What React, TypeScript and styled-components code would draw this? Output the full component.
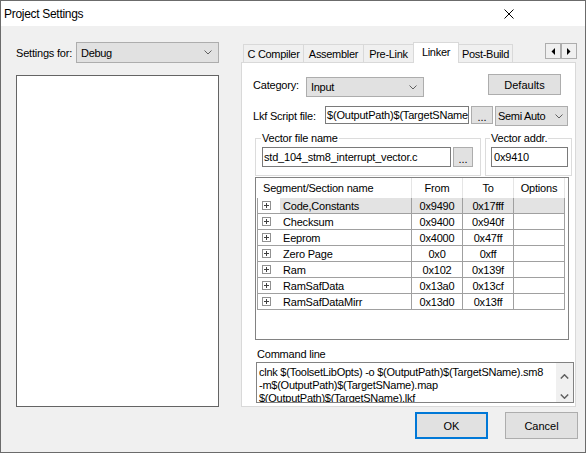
import React from "react";
import styled, { createGlobalStyle } from "styled-components";

const GlobalStyle = createGlobalStyle`
	html, body {
		margin: 0;
		padding: 0;
		background: #ffffff;
	}
	body {
		font-family: "Liberation Sans", Arial, sans-serif;
		font-size: 11px;
		color: #000000;
	}
	* {
		box-sizing: border-box;
	}
`;

const Window = styled.div`
	width: 586px;
	height: 453px;
	border: 1px solid #6b6b6b;
	background: #f0f0f0;
	display: flex;
	flex-direction: column;
	overflow: hidden;
`;

const TitleBar = styled.div`
	flex: none;
	height: 25px;
	background: #ffffff;
	display: flex;
	align-items: center;
	padding-left: 3px;
	font-size: 12px;

	> .title {
		flex: 1;
		letter-spacing: -0.3px;
	}
`;

const CloseGlyph = styled.svg`
	margin-right: 71px;
`;

const Main = styled.div`
	flex: none;
	height: 381px;
	display: flex;
	padding: 16px 0 0 15px;
`;

const LeftColumn = styled.div`
	width: 203px;
	display: flex;
	flex-direction: column;
`;

const LabelRow = styled.div`
	display: flex;
	align-items: center;
	height: 21px;
`;

const Label = styled.span<{ $w: number }>`
	width: ${p => p.$w}px;
	flex: none;
	white-space: nowrap;
	letter-spacing: -0.2px;
`;

const ComboBox = styled.div<{ $w?: number; $h: number; $pad?: number; $top?: number; $right?: number }>`
	${p => (p.$w ? `width: ${p.$w}px; flex: none;` : "flex: 1;")}
	height: ${p => p.$h}px;
	margin-top: ${p => p.$top ?? 0}px;
	background: #e1e1e1;
	border: 1px solid #adadad;
	display: flex;
	align-items: center;
	padding: 0 ${p => p.$right ?? 6}px 0 ${p => p.$pad ?? 4}px;

	> .value {
		flex: 1;
		white-space: nowrap;
		overflow: hidden;
		letter-spacing: -0.3px;
	}
	> svg {
		flex: none;
	}
`;

const ListBox = styled.div`
	margin-top: 12px;
	flex: 1;
	background: #ffffff;
	border: 1px solid #646464;
`;

const RightColumn = styled.div`
	width: 335px;
	margin-left: 22px;
	display: flex;
	flex-direction: column;
`;

const TabStrip = styled.div`
	height: 20px;
	display: flex;
	align-items: flex-end;
	padding-left: 2px;
`;

const Tab = styled.div<{ $w: number; $active?: boolean }>`
	width: ${p => p.$w}px;
	height: ${p => (p.$active ? 21 : 18)}px;
	margin-right: -1px;
	margin-bottom: ${p => (p.$active ? -1 : 0)}px;
	border: 1px solid #d9d9d9;
	border-bottom: none;
	background: ${p => (p.$active ? "#ffffff" : "#f0f0f0")};
	position: relative;
	z-index: ${p => (p.$active ? 1 : 0)};
	display: flex;
	align-items: center;
	justify-content: center;
	padding-bottom: ${p => (p.$active ? 2 : 0)}px;
	white-space: nowrap;
	letter-spacing: -0.3px;
`;

const TabScroller = styled.div`
	margin-left: auto;
	margin-right: -1px;
	align-self: flex-start;
	margin-top: 1px;
	display: flex;
`;

const ScrollButton = styled.div`
	width: 16px;
	height: 16px;
	border: 1px solid #adadad;
	background: #f0f0f0;
	display: flex;
	align-items: center;
	justify-content: center;
`;

const Panel = styled.div`
	height: 345px;
	border: 1px solid #d9d9d9;
	background: #ffffff;
	padding: 11px 0 0 11px;
	display: flex;
	flex-direction: column;
`;

const FieldRow = styled.div<{ $top?: number; $h?: number }>`
	display: flex;
	align-items: flex-start;
	margin-top: ${p => p.$top ?? 0}px;
	${p => (p.$h ? `height: ${p.$h}px;` : "")}

	> ${Label} {
		align-self: center;
	}
`;

const Button = styled.div<{ $w: number; $h: number; $default?: boolean }>`
	width: ${p => p.$w}px;
	height: ${p => p.$h}px;
	flex: none;
	background: #e1e1e1;
	border: ${p => (p.$default ? "2px solid #0078d7" : "1px solid #adadad")};
	display: flex;
	align-items: center;
	justify-content: center;
	font-size: 11px;
`;

const DefaultsButton = styled(Button)`
	margin-left: auto;
	margin-right: 14px;
`;

const TextInput = styled.div<{ $w: number; $h: number; $pad?: number }>`
	width: ${p => p.$w}px;
	height: ${p => p.$h}px;
	flex: none;
	background: #ffffff;
	border: 1px solid #7a7a7a;
	display: flex;
	align-items: center;
	padding-left: ${p => p.$pad ?? 1}px;
	white-space: nowrap;
	overflow: hidden;
	letter-spacing: -0.2px;
`;

const BrowseButton = styled.div<{ $w: number; $h: number }>`
	width: ${p => p.$w}px;
	height: ${p => p.$h}px;
	flex: none;
	margin-left: 2px;
	margin-right: 2px;
	background: #e1e1e1;
	border: 1px solid #adadad;
	display: flex;
	align-items: center;
	justify-content: center;
	padding-top: 3px;
`;

const GroupRow = styled.div`
	display: flex;
	gap: 4px;
	margin: 6px 0 0 2px;
`;

const GroupBox = styled.fieldset<{ $w: number; $pad: number; $right: number }>`
	width: ${p => p.$w}px;
	margin: 0;
	border: 1px solid #dcdcdc;
	padding: 2px ${p => p.$right}px 8px ${p => p.$pad}px;
	display: flex;

	> legend {
		padding: 0 1px;
		margin-left: -1px;
		line-height: 13px;
		font-size: 11px;
		letter-spacing: -0.2px;
	}
`;

const Table = styled.div`
	margin: 1px 0 0 2px;
	width: 314px;
	height: 163px;
	border: 1px solid #828282;
	background: #ffffff;
	padding-left: 1px;
`;

const Grid = styled.div`
	display: grid;
	grid-template-columns: 23px 132px 51px 51px 51px;
	width: 308px;
`;

const HeadCell = styled.div<{ $span?: number; $left?: boolean }>`
	grid-column: span ${p => p.$span ?? 1};
	height: 20px;
	display: flex;
	align-items: center;
	justify-content: ${p => (p.$left ? "flex-start" : "center")};
	padding-left: ${p => (p.$left ? 6 : 0)}px;
	border-right: 1px solid #e5e5e5;
	white-space: nowrap;
	letter-spacing: -0.2px;
`;

const Cell = styled.div<{ $first?: boolean; $hot?: boolean; $left?: boolean }>`
	height: 16px;
	display: flex;
	align-items: center;
	justify-content: ${p => (p.$left || p.$first ? "flex-start" : "center")};
	padding-left: ${p => (p.$first ? 4 : p.$left ? 3 : 0)}px;
	border-bottom: 1px solid #a0a0a0;
	border-left: ${p => (p.$first ? "1px solid #a0a0a0" : "none")};
	border-right: ${p => (p.$first ? "none" : "1px solid #a0a0a0")};
	background: ${p => (p.$hot ? "#e3e3e3" : "#ffffff")};
	white-space: nowrap;
	overflow: hidden;
	letter-spacing: -0.2px;
`;

const CommandLabel = styled.div`
	margin: 8px 0 0 4px;
	line-height: 13px;
	letter-spacing: -0.2px;
`;

const CommandBox = styled.div`
	margin: 1px 0 0 3px;
	width: 318px;
	height: 41px;
	border: 1px solid #828282;
	background: #ffffff;
	display: flex;
	overflow: hidden;

	> .text {
		flex: 1;
		padding: 3px 0 0 2px;
		line-height: 13px;
		white-space: nowrap;
		overflow: hidden;
		letter-spacing: -0.25px;
	}
`;

const VScroll = styled.div`
	width: 17px;
	flex: none;
	background: #f0f0f0;
	display: flex;
	flex-direction: column;
	align-items: center;
	justify-content: space-between;
	padding: 11px 0 3px;
`;

const Footer = styled.div`
	display: flex;
	justify-content: flex-end;
	gap: 17px;
	padding: 5px 7px 0 0;
`;

const segments = [
	{ name: "Code,Constants", from: "0x9490", to: "0x17fff" },
	{ name: "Checksum", from: "0x9400", to: "0x940f" },
	{ name: "Eeprom", from: "0x4000", to: "0x47ff" },
	{ name: "Zero Page", from: "0x0", to: "0xff" },
	{ name: "Ram", from: "0x102", to: "0x139f" },
	{ name: "RamSafData", from: "0x13a0", to: "0x13cf" },
	{ name: "RamSafDataMirr", from: "0x13d0", to: "0x13ff" },
];

const Chevron = () => (
	<svg width="8" height="5" viewBox="0 0 8 5">
		<polyline points="0.5,0.5 4,4 7.5,0.5" fill="none" stroke="#606060" strokeWidth="1" />
	</svg>
);

const Expander = () => (
	<svg width="9" height="9" viewBox="0 0 9 9">
		<rect x="0.5" y="0.5" width="8" height="8" fill="#ffffff" stroke="#919191" />
		<line x1="2" y1="4.5" x2="7" y2="4.5" stroke="#404040" />
		<line x1="4.5" y1="2" x2="4.5" y2="7" stroke="#404040" />
	</svg>
);

export default function App() {
	return (
		<>
			<GlobalStyle />
			<Window>
				<TitleBar>
					<span className="title">Project Settings</span>
					<CloseGlyph width="10" height="10" viewBox="0 0 10 10">
						<line x1="0.5" y1="0.5" x2="9.5" y2="9.5" stroke="#000" strokeWidth="1" />
						<line x1="9.5" y1="0.5" x2="0.5" y2="9.5" stroke="#000" strokeWidth="1" />
					</CloseGlyph>
				</TitleBar>

				<Main>
					<LeftColumn>
						<LabelRow>
							<Label $w={60}>Settings for:</Label>
							<ComboBox $h={21}>
								<span className="value">Debug</span>
								<Chevron />
							</ComboBox>
						</LabelRow>
						<ListBox />
					</LeftColumn>

					<RightColumn>
						<TabStrip>
							<Tab $w={61}>C Compiler</Tab>
							<Tab $w={61}>Assembler</Tab>
							<Tab $w={51}>Pre-Link</Tab>
							<Tab $w={46} $active>Linker</Tab>
							<Tab $w={55}>Post-Build</Tab>
							<TabScroller>
								<ScrollButton>
									<svg width="4" height="7" viewBox="0 0 4 7">
										<polygon points="4,0 4,7 0.5,3.5" fill="#000" />
									</svg>
								</ScrollButton>
								<ScrollButton>
									<svg width="4" height="7" viewBox="0 0 4 7">
										<polygon points="0,0 0,7 3.5,3.5" fill="#000" />
									</svg>
								</ScrollButton>
							</TabScroller>
						</TabStrip>

						<Panel>
							<FieldRow $h={22}>
								<Label $w={53}>Category:</Label>
								<ComboBox $w={118} $h={20} $top={3}>
									<span className="value">Input</span>
									<Chevron />
								</ComboBox>
								<DefaultsButton $w={73} $h={21}>Defaults</DefaultsButton>
							</FieldRow>

							<FieldRow $top={10}>
								<Label $w={72}>Lkf Script file:</Label>
								<TextInput $w={144} $h={18}>$(OutputPath)$(TargetSName).lkf</TextInput>
								<BrowseButton $w={22} $h={18}>...</BrowseButton>
								<ComboBox $w={73} $h={20} $pad={2} $right={4}>
									<span className="value">Semi Auto</span>
									<Chevron />
								</ComboBox>
							</FieldRow>

							<GroupRow>
								<GroupBox $w={223} $pad={6} $right={5}>
									<legend>Vector file name</legend>
									<TextInput $w={189} $h={20}>std_104_stm8_interrupt_vector.c</TextInput>
									<BrowseButton $w={20} $h={20}>...</BrowseButton>
								</GroupBox>
								<GroupBox $w={87} $pad={5} $right={2}>
									<legend>Vector addr.</legend>
									<TextInput $w={77} $h={20} $pad={2}>0x9410</TextInput>
								</GroupBox>
							</GroupRow>

							<Table>
								<Grid>
									<HeadCell $span={2} $left>Segment/Section name</HeadCell>
									<HeadCell>From</HeadCell>
									<HeadCell>To</HeadCell>
									<HeadCell>Options</HeadCell>
									{segments.map((s, i) => (
										<React.Fragment key={s.name}>
											<Cell $first><Expander /></Cell>
											<Cell $left $hot={i === 0}>{s.name}</Cell>
											<Cell $hot={i === 0}>{s.from}</Cell>
											<Cell $hot={i === 0}>{s.to}</Cell>
											<Cell $hot={i === 0} />
										</React.Fragment>
									))}
								</Grid>
							</Table>

							<CommandLabel>Command line</CommandLabel>
							<CommandBox>
								<div className="text">
									<div>clnk $(ToolsetLibOpts) -o $(OutputPath)$(TargetSName).sm8</div>
									<div>-m$(OutputPath)$(TargetSName).map</div>
									<div>$(OutputPath)$(TargetSName).lkf</div>
								</div>
								<VScroll>
									<svg width="9" height="5" viewBox="0 0 9 5">
										<polyline points="0.8,4.5 4.5,0.8 8.2,4.5" fill="none" stroke="#606060" strokeWidth="1.5" />
									</svg>
									<svg width="9" height="5" viewBox="0 0 9 5">
										<polyline points="0.8,0.5 4.5,4.2 8.2,0.5" fill="none" stroke="#606060" strokeWidth="1.5" />
									</svg>
								</VScroll>
							</CommandBox>
						</Panel>
					</RightColumn>
				</Main>

				<Footer>
					<Button $w={73} $h={27} $default>OK</Button>
					<Button $w={73} $h={27}>Cancel</Button>
				</Footer>
			</Window>
		</>
	);
}
